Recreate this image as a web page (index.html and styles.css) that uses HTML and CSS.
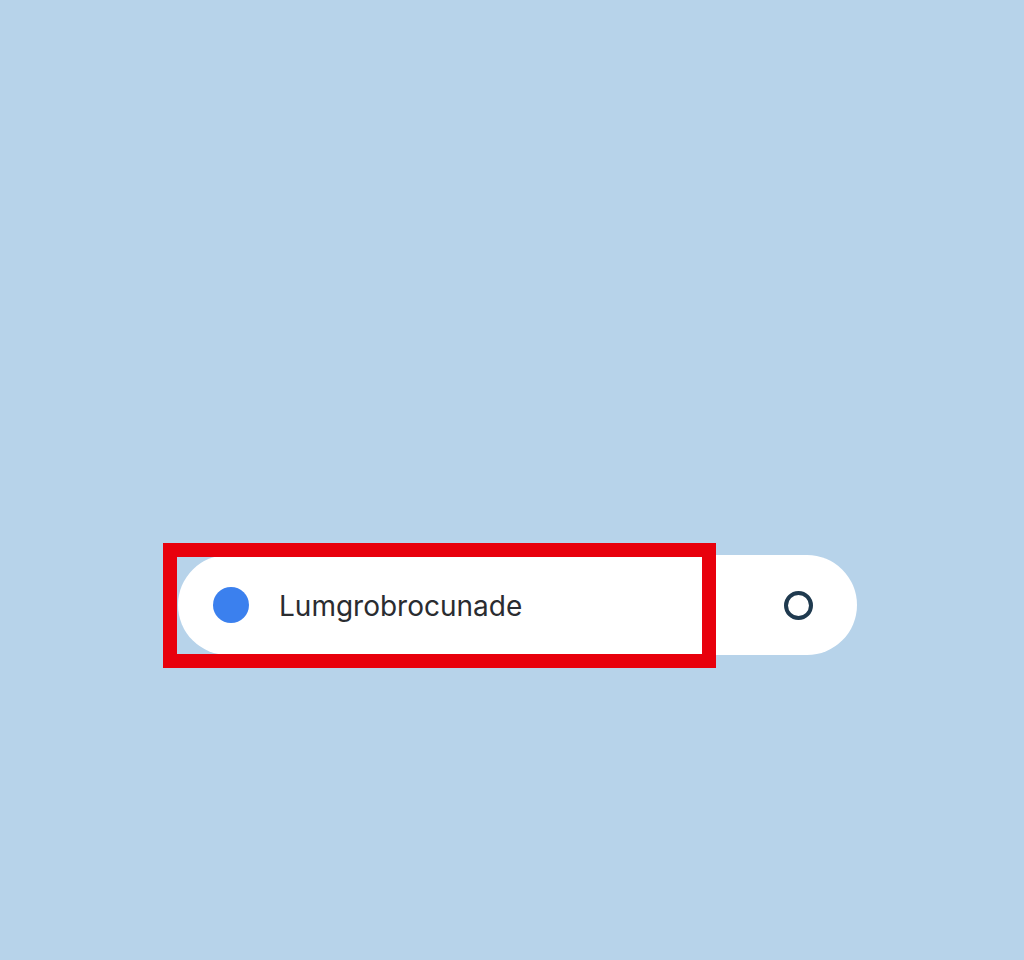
FILE: index.html
```html
<!DOCTYPE html>
<html>
<head>
<meta charset="utf-8">
<link rel="stylesheet" href="styles.css">
</head>
<body>
<div class="stage">
  <div class="pill">
    <span class="dot"></span>
    <span class="label">Lumgrobrocunade</span>
    <span class="ring"></span>
    <div class="highlight"></div>
  </div>
</div>
</body>
</html>
```
FILE: styles.css
```css
html, body {
  margin: 0;
  padding: 0;
  background: #b7d3ea;
  width: 1024px;
  height: 960px;
  overflow: hidden;
}
.stage {
  padding-top: 555px;
  padding-left: 178px;
}
.pill {
  position: relative;
  width: 679px;
  height: 100px;
  border-radius: 50px;
  background: #ffffff;
  display: flex;
  align-items: center;
  box-sizing: border-box;
  padding-left: 35px;
  padding-right: 44px;
}
.dot {
  width: 36px;
  height: 36px;
  border-radius: 50%;
  background: #3b80ee;
  flex: none;
}
.label {
  margin-left: 30px;
  font-family: Inter, "Open Sans", sans-serif;
  font-size: 28px;
  color: #2a2c30;
  flex: 1;
  position: relative;
  top: 1px;
}
.ring {
  width: 29px;
  height: 29px;
  border: 4px solid #1f3a4f;
  border-radius: 50%;
  box-sizing: border-box;
  flex: none;
}
.highlight {
  position: absolute;
  left: -15px;
  top: -12px;
  width: 553px;
  height: 125px;
  border: 14px solid #e8000c;
  box-sizing: border-box;
}
```
